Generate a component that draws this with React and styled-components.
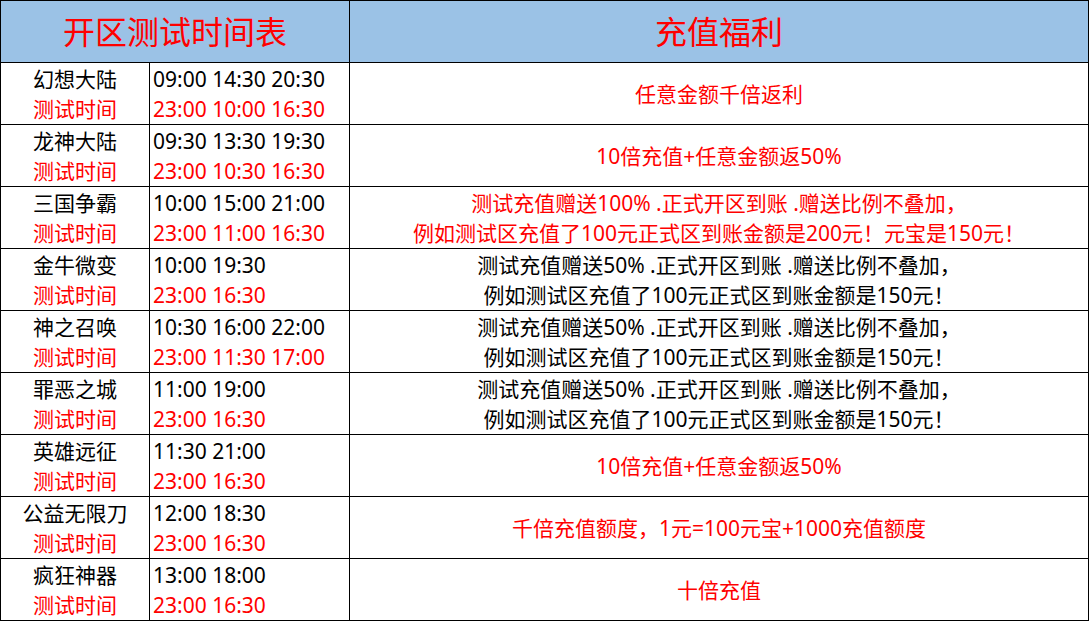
import React from 'react';
import styled, { createGlobalStyle } from 'styled-components';

const GlobalStyle = createGlobalStyle`
    html, body {
        margin: 0;
        padding: 0;
        background: #ffffff;
    }
`

const rows = [
    { name: '幻想大陆', open: '09:00 14:30 20:30', test: '23:00 10:00 16:30', bonus: ['任意金额千倍返利'], red: true },
    { name: '龙神大陆', open: '09:30 13:30 19:30', test: '23:00 10:30 16:30', bonus: ['10倍充值+任意金额返50%'], red: true },
    { name: '三国争霸', open: '10:00 15:00 21:00', test: '23:00 11:00 16:30', bonus: ['测试充值赠送100% .正式开区到账 .赠送比例不叠加，', '例如测试区充值了100元正式区到账金额是200元！元宝是150元！'], red: true },
    { name: '金牛微变', open: '10:00 19:30', test: '23:00 16:30', bonus: ['测试充值赠送50% .正式开区到账 .赠送比例不叠加，', '例如测试区充值了100元正式区到账金额是150元！'] },
    { name: '神之召唤', open: '10:30 16:00 22:00', test: '23:00 11:30 17:00', bonus: ['测试充值赠送50% .正式开区到账 .赠送比例不叠加，', '例如测试区充值了100元正式区到账金额是150元！'] },
    { name: '罪恶之城', open: '11:00 19:00', test: '23:00 16:30', bonus: ['测试充值赠送50% .正式开区到账 .赠送比例不叠加，', '例如测试区充值了100元正式区到账金额是150元！'] },
    { name: '英雄远征', open: '11:30 21:00', test: '23:00 16:30', bonus: ['10倍充值+任意金额返50%'], red: true },
    { name: '公益无限刀', open: '12:00 18:30', test: '23:00 16:30', bonus: ['千倍充值额度，1元=100元宝+1000充值额度'], red: true },
    { name: '疯狂神器', open: '13:00 18:00', test: '23:00 16:30', bonus: ['十倍充值'], red: true },
]

const Sheet = styled.div`
    display: grid;
    grid-template-columns: 149px 200px 1fr;
    grid-auto-rows: 62px;
    width: 1089px;
    box-sizing: border-box;
    border-left: 1px solid #000;
    border-top: 1px solid #000;
    font-family: "Noto Sans", "Noto Sans CJK SC", sans-serif;
`

const Cell = styled.div`
    box-sizing: border-box;
    border-right: 1px solid #000;
    border-bottom: 1px solid #000;
    display: flex;
    flex-direction: column;
    justify-content: center;
    font-size: 21px;
    line-height: 30px;
    white-space: nowrap;
`

const HeadCell = styled(Cell)`
    grid-column: ${props => props.wide ? 'span 2' : 'auto'};
    align-items: center;
    background: #9bc2e6;
    color: #ff0000;
    font-size: 32px;
    line-height: 40px;
`

const NameCell = styled(Cell)`
    align-items: center;
`

const TimeCell = styled(Cell)`
    align-items: flex-start;
    padding-left: 3px;
`

const BonusCell = styled(Cell)`
    align-items: center;
    color: ${props => props.red ? '#ff0000' : '#000'};
`

const Line = styled.span`
    color: ${props => props.red ? '#ff0000' : '#000'};
`

const App = () => {
    return (
        <>
            <GlobalStyle />
            <Sheet>
                <HeadCell wide>开区测试时间表</HeadCell>
                <HeadCell>充值福利</HeadCell>
                {rows.map(row => (
                    <React.Fragment key={row.name}>
                        <NameCell>
                            <Line>{row.name}</Line>
                            <Line red>测试时间</Line>
                        </NameCell>
                        <TimeCell>
                            <Line>{row.open}</Line>
                            <Line red>{row.test}</Line>
                        </TimeCell>
                        <BonusCell red={row.red}>
                            {row.bonus.map(text => <span key={text}>{text}</span>)}
                        </BonusCell>
                    </React.Fragment>
                ))}
            </Sheet>
        </>
    )
}

export default App;
